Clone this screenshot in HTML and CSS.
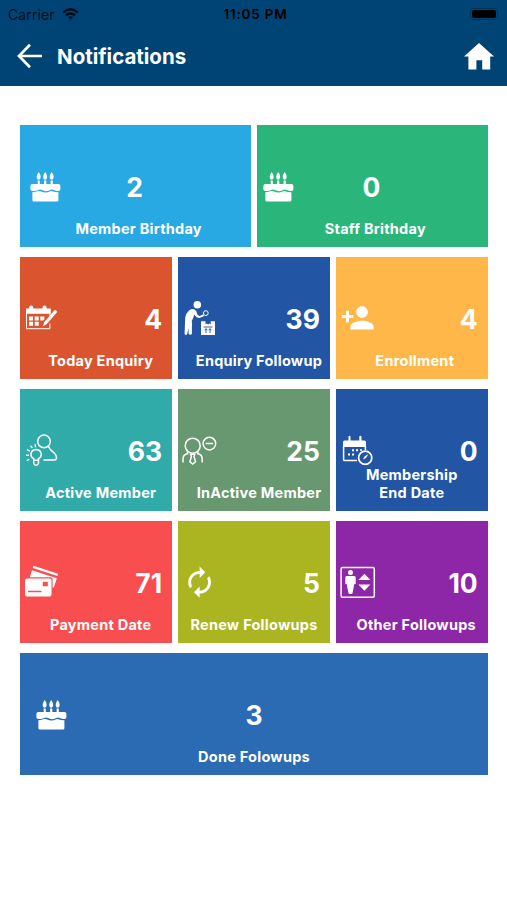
FILE: index.html
```html
<!DOCTYPE html>
<html lang="en">
<head>
    <meta charset="UTF-8">
    <meta name="viewport" content="width=device-width, initial-scale=1.0">
    <title>Notifications</title>
    <link rel="stylesheet" href="styles.css">
</head>
<body>
    <svg class="symbols" width="0" height="0">
        <symbol id="cake" viewBox="0 0 44 40">
            <path d="M18.7 5c-3 4-2.2 7.4 0 7.7c2.2-.3 3-3.7 0-7.7zM25.2 5c-3 4-2.2 7.4 0 7.7c2.2-.3 3-3.7 0-7.7zM31.7 5c-3 4-2.2 7.4 0 7.7c2.2-.3 3-3.7 0-7.7z"/>
            <path d="M17.6 13.6h2.2V17h4.3v-3.4h2.2V17h4.3v-3.4h2.2V17h5.6q2 0 2 2v3.2q0 1.8-2 1.8q-2.6 0-4.6-1q-2-1-4.2.3q-4 2-7.6-.2q-2-1.100-4.200.2q-2.600 1.100-5.400.7q-2 0-2-1.800V19q0-2 2-2h5.400z"/>
            <path d="M12.400 25.200q3.400 0 5.600-1.100q1.600-.6 3.200.4q4.300 2 8.400 0q1.800-1 3.400 0q2 .9 5.400.8v8q0 1.100-1.100 1.100H13.500q-1.100 0-1.100-1.100z"/>
        </symbol>
    </svg>

    <header class="header">
        <div class="status-bar">
            <div class="carrier">
                Carrier
                <svg class="wifi" width="17" height="12" viewBox="0 0 17 12">
                    <g fill="none" stroke="#000" stroke-width="2.400">
                        <path d="M1.200 4.500q7.300-6.400 14.600 0"/>
                        <path d="M3.900 7.400q4.600-3.900 9.200 0"/>
                    </g>
                    <path d="M5.900 9.200q2.600-2 5.200 0L8.500 11.800z"/>
                </svg>
            </div>
            <div class="clock">11:05 PM</div>
            <div class="battery-wrap"><div class="battery"></div></div>
        </div>
        <div class="nav-bar">
            <svg class="back" width="26" height="26" viewBox="0 0 26 26">
                <path d="M13 1.800L2 13l11 11.200M2.500 13H25" fill="none" stroke="#fff" stroke-width="2.700"/>
            </svg>
            <h1>Notifications</h1>
            <svg class="home" width="30" height="27" viewBox="0 0 30 27">
                <path d="M15 0L30 13.500h-3.800V26.500h-8v-9.300h-5.800v9.300h-8V13.500H0z" fill="#fff"/>
            </svg>
        </div>
    </header>

    <main class="tiles">
        <div class="tile half sky">
            <div class="tile-body">
                <svg class="icon"><use href="#cake"/></svg>
                <div class="count">2</div>
            </div>
            <div class="label">Member Birthday</div>
        </div>
        <div class="tile half green">
            <div class="tile-body">
                <svg class="icon"><use href="#cake"/></svg>
                <div class="count">0</div>
            </div>
            <div class="label">Staff Brithday</div>
        </div>

        <div class="tile orange">
            <div class="tile-body">
                <svg class="icon" viewBox="0 0 44 40">
                    <path d="M6 9.500h3.200V8q0-1.600 2-1.600t2 1.600v1.500h9.300V8q0-1.600 2-1.600t2 1.600v1.500h4.300v5.200H6z"/>
                    <path d="M6.500 14v15.700h23.400V24.500M29.900 14v3" fill="none" stroke="#fff"/>
                    <path d="M9 17.400h4v4H9zM14.700 17.400h4v4h-4zM20.300 17.400h4v3l-1 1h-3zM9 22.700h4v4H9zM14.700 22.700h4v4h-4z"/>
                    <path d="M34.200 11.600q1-1 2.200.1q1 1 .2 2.100L26.800 25l-3.800 2.200l1.300-4.100z"/>
                </svg>
                <div class="count">4</div>
            </div>
            <div class="label">Today Enquiry</div>
        </div>
        <div class="tile blue">
            <div class="tile-body">
                <svg class="icon" viewBox="0 0 44 40">
                    <circle cx="19.300" cy="5.800" r="3.800"/>
                    <path d="M11 11.500q3.500-2.300 6-.8q1.500.8 2.500 5l2 1.300l3.500-1.400q1.500.2.8 1.700l-4.300 1.800q-2.500-.2-4.200-2l-1-1.500q-1 4-2.600 6.500q.6 2 .2 6V35q-1.800 1.400-3.200 0l-.3-6q-.6 4-1.400 6.500q-1.500 1-2.400-.4l.6-16.600q1-4.500 3.800-7z"/>
                    <circle cx="27.800" cy="14.100" r="2.400" fill="none" stroke="#fff" stroke-width="1"/>
                    <path d="M23 22.300h4.500v3.200l1.300-.9l1.300.9l1.300-.9l1.300.9v-3.200H37V36H23z"/>
                    <path d="M25.500 28h9M28 34V30M32 34V30M26.800 31.200L28 29.500l1.200 1.700M30.800 31.200L32 29.500l1.200 1.700" fill="none" stroke="#2256a5" stroke-width=".9"/>
                </svg>
                <div class="count">39</div>
            </div>
            <div class="label shift-right">Enquiry Followup</div>
        </div>
        <div class="tile amber">
            <div class="tile-body">
                <svg class="icon" viewBox="0 0 44 40">
                    <path transform="translate(4.300 1.500) scale(1.450)" d="M15 12c2.210 0 4-1.790 4-4s-1.790-4-4-4-4 1.790-4 4 1.790 4 4 4zm-9-2V7H4v3H1v2h3v3h2v-3h3v-2H6zm9 4c-2.670 0-8 1.340-8 4v2h16v-2c0-2.660-5.330-4-8-4z"/>
                </svg>
                <div class="count">4</div>
            </div>
            <div class="label shift-left">Enrollment</div>
        </div>

        <div class="tile teal">
            <div class="tile-body">
                <svg class="icon line" viewBox="0 0 44 40">
                    <circle cx="24" cy="10.400" r="6.300"/>
                    <path d="M28.500 15.500q1.300 3 4.400 5.300q3.800 3.200 3.600 6q-.3 2.300-2.800 2.300H23.500"/>
                    <path d="M13.700 29.200v-1.600q-2.800-1.600-2.800-4.200q.3-4.700 5.200-4.900q4.900.2 5.200 4.900q0 2.600-2.800 4.200v1.600zM13.700 29.200v3.200q.5 1.800 2.400 1.800t2.400-1.800v-3.200"/>
                    <path d="M6 24.200h3M7 18.700l2.800 1.400M10.600 14.700l1.700 2.500M15.200 13.300l.3 3M6.800 29.700l2.600-1.600"/>
                </svg>
                <div class="count">63</div>
            </div>
            <div class="label">Active Member</div>
        </div>
        <div class="tile sage">
            <div class="tile-body">
                <svg class="icon line" viewBox="0 0 44 40">
                    <circle cx="14.700" cy="14.700" r="7.500"/>
                    <circle cx="31.400" cy="12.600" r="6.300"/>
                    <path d="M27.800 12.600H35M9.500 20.500v2.300q-4.500 1-4.500 5.200v3.500M19.900 20.500v2.300q4.300 1 4.300 5.200v3.500M12.600 23.200h4.200l-.8 2.300l1.500 5.200l-2.800 2.400l-2.800-2.400l1.500-5.200z"/>
                </svg>
                <div class="count">25</div>
            </div>
            <div class="label shift-right">InActive Member</div>
        </div>
        <div class="tile blue">
            <div class="tile-body">
                <svg class="icon" viewBox="0 0 44 40">
                    <path d="M7 16V11q0-1.500 1.500-1.500h4V5.500q1-1.700 2 0v4h8.800V5.500q1.100-1.700 2.200 0v4h3q1.500 0 1.500 1.500v5z"/>
                    <path d="M7.600 15v13.700q0 .8.800.8H21M29.400 15v4" fill="none" stroke="#fff" stroke-width="1.500"/>
                    <path d="M16 18.300h2v2h-2zM20 18.300h2v2h-2zM24 18.300h2v1.500h-2zM12 22.500h2v2h-2zM16 22.500h2v2h-2z"/>
                    <circle cx="29.200" cy="26.700" r="6.600" fill="none" stroke="#fff" stroke-width="1.700"/>
                    <path d="M27 28.600l1.500-3.200l3.800-2.500l-2.300 4z"/>
                </svg>
                <div class="count">0</div>
            </div>
            <div class="label centered">Membership<br>End Date</div>
        </div>

        <div class="tile red">
            <div class="tile-body">
                <svg class="icon" viewBox="0 0 44 40">
                    <path d="M13.500 2.700L38 10.800l-.6 2.200L12.800 4.900z"/>
                    <path d="M12 7.300L36.800 15.300L34 24q-.4 1-1.400.7V16.500q0-2.200-2.300-2.200H9.800z"/>
                    <rect x="5" y="15.500" width="26.500" height="18" rx="2"/>
                    <path d="M22.800 18.800h5v4.400h-5zM8 27.700h13.500v1.500H8z" fill="#f94e50"/>
                </svg>
                <div class="count">71</div>
            </div>
            <div class="label">Payment Date</div>
        </div>
        <div class="tile olive">
            <div class="tile-body">
                <svg class="icon" viewBox="0 0 44 40">
                    <path transform="translate(4.600 2.200) scale(1.420)" d="M12 6v3l4-4-4-4v3c-4.420 0-8 3.580-8 8 0 1.570.46 3.030 1.240 4.260L6.700 14.800c-.45-.83-.7-1.790-.7-2.800 0-3.310 2.690-6 6-6zm6.760 1.740L17.300 9.200c.44.84.7 1.790.7 2.800 0 3.310-2.690 6-6 6v-3l-4 4 4 4v-3c4.420 0 8-3.580 8-8 0-1.570-.46-3.030-1.240-4.260z"/>
                </svg>
                <div class="count">5</div>
            </div>
            <div class="label centered">Renew Followups</div>
        </div>
        <div class="tile purple">
            <div class="tile-body">
                <svg class="icon" viewBox="0 0 44 40">
                    <rect x="5.100" y="4.400" width="33.200" height="29.800" rx="1.500" fill="none" stroke="#fff" stroke-width="1.500"/>
                    <circle cx="14.500" cy="9.500" r="2.500"/>
                    <path d="M10.800 12.900h7.400q1.500 0 1.500 1.500v6.400q-1 1.500-1.800 0v2.700l-1.500 7q-1.900 1.200-3.800 0l-1.500-7v-2.700q-1 1.500-1.800 0v-6.400q0-1.500 1.500-1.500z"/>
                    <path d="M28.400 10.700l6 6.300h-12zM28.400 27.700l6-6.300h-12z"/>
                </svg>
                <div class="count">10</div>
            </div>
            <div class="label">Other Followups</div>
        </div>

        <div class="tile full royal">
            <div class="tile-body">
                <svg class="icon"><use href="#cake"/></svg>
                <div class="count">3</div>
            </div>
            <div class="label centered">Done Folowups</div>
        </div>
    </main>
</body>
</html>
```
FILE: styles.css
```css
* {
    box-sizing: border-box;
}
body {
    font-family: Inter, "Liberation Sans", sans-serif;
    margin: 0;
    background-color: #fff;
}
.symbols {
    display: block;
}
.header {
    height: 86px;
    background-color: #004475;
}
.status-bar {
    display: flex;
    align-items: center;
    height: 28px;
    padding: 0 9px 0 8px;
    font-size: 14px;
    color: #000;
}
.carrier {
    display: flex;
    align-items: center;
    flex: 1;
    gap: 7px;
    letter-spacing: 0.1px;
    opacity: 0.8;
}
.clock {
    margin-left: 5px;
    font-size: 13.5px;
    font-weight: 600;
    letter-spacing: 0.8px;
}
.battery-wrap {
    display: flex;
    flex: 1;
    justify-content: flex-end;
}
.battery {
    width: 28px;
    height: 12px;
    border: 1px solid #00325a;
    border-radius: 4px;
    padding: 1px;
    background-color: #000;
    background-clip: content-box;
}
.nav-bar {
    display: flex;
    align-items: center;
    height: 56px;
    padding: 0 13px 0 17px;
}
.nav-bar h1 {
    flex: 1;
    margin: 0 0 0 14px;
    font-size: 20.5px;
    font-weight: 700;
    color: #fff;
}
.tiles {
    display: grid;
    grid-template-columns: repeat(6, 1fr);
    grid-auto-rows: 122px;
    gap: 10px 6px;
    width: 467.4px;
    margin: 39.3px 0 0 20.3px;
}
.tile {
    display: flex;
    flex-direction: column;
    grid-column: span 2;
    padding: 42px 0 10px;
    color: #fff;
}
.tile.half {
    grid-column: span 3;
}
.tile.full {
    grid-column: span 6;
}
.tile-body {
    display: flex;
    flex: none;
    align-items: center;
    height: 40px;
    padding-right: 10px;
}
.icon {
    flex: none;
    width: 44px;
    height: 40px;
    fill: #fff;
}
.icon.line {
    fill: none;
    stroke: #fff;
    stroke-width: 1.5;
}
.count {
    flex: 1;
    font-size: 26.5px;
    font-weight: 700;
    text-align: right;
}
.half .tile-body {
    padding-right: 46px;
}
.green .tile-body {
    padding: 0 42px 0 0;
}
.green .icon {
    margin-left: -4px;
}
.half .count,
.full .count {
    text-align: center;
}
.full .tile-body {
    padding: 0 50px 0 6px;
}
.label {
    display: flex;
    flex: 1;
    align-items: flex-end;
    justify-content: center;
    min-height: 0;
    padding-left: 9px;
    font-size: 14.5px;
    font-weight: 700;
    line-height: 17.5px;
    letter-spacing: 0.25px;
    text-align: center;
    white-space: nowrap;
}
.half .label {
    padding-left: 6px;
}
.label.shift-right {
    padding-left: 10px;
}
.label.shift-left {
    padding-left: 6px;
}
.label.centered {
    padding-left: 0;
}

.sky { background-color: #29a9e4; }
.green { background-color: #2ab67b; }
.orange { background-color: #da552f; }
.blue { background-color: #2256a5; }
.amber { background-color: #ffb74a; }
.teal { background-color: #31aaaa; }
.sage { background-color: #68986f; }
.red { background-color: #f94e50; }
.olive { background-color: #aab521; }
.purple { background-color: #8e26a8; }
.royal { background-color: #2b6bb3; }
```
